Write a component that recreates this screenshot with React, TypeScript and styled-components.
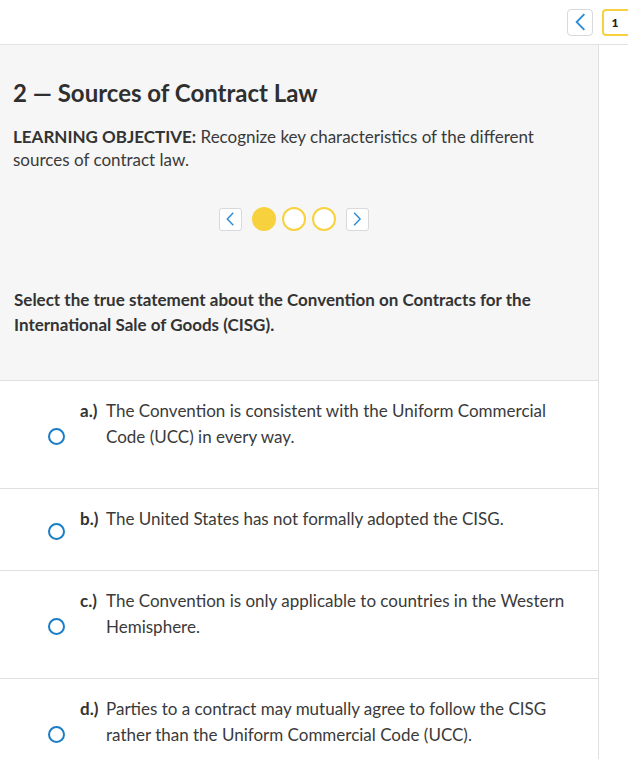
import styled, { createGlobalStyle } from 'styled-components'

const GlobalStyle = createGlobalStyle`
  html, body {
    margin: 0;
    padding: 0;
    background: #ffffff;
  }
  body {
    font-family: Lato, "Open Sans", "Liberation Sans", sans-serif;
    color: #333333;
    -webkit-font-smoothing: antialiased;
  }
`

const Page = styled.div`
  width: 628px;
  height: 759px;
  overflow: hidden;
`

const TopBar = styled.div`
  display: flex;
  justify-content: flex-end;
  align-items: center;
  gap: 9px;
  height: 44px;
  border-bottom: 1px solid #e2e2e2;
  margin-right: -6px;
`

const BackButton = styled.button`
  display: flex;
  align-items: center;
  justify-content: center;
  width: 26px;
  height: 27px;
  padding: 0;
  background: #ffffff;
  border: 1.5px solid #d8d8dd;
  border-radius: 4px;
`

const CountBox = styled.div`
  display: flex;
  align-items: center;
  justify-content: center;
  width: 32px;
  height: 27px;
  box-sizing: border-box;
  border: 2px solid #f7d23e;
  border-radius: 4px;
  font-size: 12px;
  font-weight: 900;
  color: #222222;
  padding-right: 6px;
`

const Body = styled.div`
  display: flex;
`

const Main = styled.div`
  width: 598px;
  border-right: 1px solid #e0e0e0;
  min-height: 714px;
`

const Intro = styled.section`
  background: #f6f6f6;
  padding: 34px 40px 43px 13px;
  border-bottom: 1px solid #e0e0e0;
`

const Title = styled.h1`
  margin: 0;
  font-size: 24px;
  line-height: 28px;
  font-weight: 700;
  color: #2f2f2f;
`

const Objective = styled.p`
  margin: 18px 0 0;
  font-size: 17px;
  line-height: 23px;
  color: #3a3a3a;
  strong {
    font-weight: 700;
    color: #333333;
  }
`

const Pager = styled.div`
  display: flex;
  align-items: center;
  justify-content: center;
  margin-top: 36px;
  margin-left: 17px;
`

const PagerButton = styled.button`
  display: flex;
  align-items: center;
  justify-content: center;
  width: 23px;
  height: 23px;
  padding: 0;
  background: #ffffff;
  border: 1.5px solid #d8d8dd;
  border-radius: 3px;
  margin: 0 10px;
`

const Dots = styled.div`
  display: flex;
  gap: 6px;
`

const Dot = styled.span<{ $active?: boolean }>`
  width: 24px;
  height: 24px;
  box-sizing: border-box;
  border-radius: 50%;
  border: 2px solid #f7d23e;
  background: ${(p) => (p.$active ? '#f7d23e' : '#ffffff')};
`

const Question = styled.p`
  margin: 56px 0 0 1px;
  font-size: 17px;
  line-height: 25px;
  font-weight: 700;
  color: #333333;
`

const Option = styled.label`
  display: flex;
  align-items: center;
  padding: 17px 28px 17px 48px;
  border-bottom: 1px solid #e0e0e0;
  &:last-child {
    border-bottom: none;
  }
`

const Radio = styled.span`
  flex: none;
  width: 17px;
  height: 17px;
  box-sizing: border-box;
  border-radius: 50%;
  border: 2px solid #1b7dc6;
  margin-top: 3px;
`

const OptionText = styled.div`
  display: flex;
  align-self: flex-start;
  margin: 0 0 21px 15px;
  font-size: 17px;
  line-height: 26px;
  color: #3a3a3a;
`

const Letter = styled.span`
  flex: none;
  width: 26px;
  font-weight: 700;
  color: #333333;
`

const Chevron = ({ dir, size = 14 }: { dir: 'left' | 'right'; size?: number }) => (
  <svg width={size * 0.6} height={size} viewBox="0 0 6 10" fill="none">
    <path
      d={dir === 'left' ? 'M5.2 0.6 L0.9 5 L5.2 9.4' : 'M0.8 0.6 L5.1 5 L0.8 9.4'}
      stroke="#2a8ad4"
      strokeWidth="1"
      strokeLinejoin="miter"
    />
  </svg>
)

const options = [
  {
    letter: 'a.)',
    text: 'The Convention is consistent with the Uniform Commercial Code (UCC) in every way.',
  },
  { letter: 'b.)', text: 'The United States has not formally adopted the CISG.' },
  {
    letter: 'c.)',
    text: 'The Convention is only applicable to countries in the Western Hemisphere.',
  },
  {
    letter: 'd.)',
    text: 'Parties to a contract may mutually agree to follow the CISG rather than the Uniform Commercial Code (UCC).',
  },
]

const App = () => {
  return (
    <Page>
      <GlobalStyle />
      <TopBar>
        <BackButton>
          <Chevron dir="left" size={18} />
        </BackButton>
        <CountBox>1</CountBox>
      </TopBar>
      <Body>
        <Main>
          <Intro>
            <Title>2 — Sources of Contract Law</Title>
            <Objective>
              <strong>LEARNING OBJECTIVE:</strong> Recognize key characteristics of the different
              sources of contract law.
            </Objective>
            <Pager>
              <PagerButton>
                <Chevron dir="left" />
              </PagerButton>
              <Dots>
                <Dot $active />
                <Dot />
                <Dot />
              </Dots>
              <PagerButton>
                <Chevron dir="right" />
              </PagerButton>
            </Pager>
            <Question>
              Select the true statement about the Convention on Contracts for the International
              Sale of Goods (CISG).
            </Question>
          </Intro>
          {options.map((o) => (
            <Option key={o.letter}>
              <Radio />
              <OptionText>
                <Letter>{o.letter}</Letter>
                <span>{o.text}</span>
              </OptionText>
            </Option>
          ))}
        </Main>
      </Body>
    </Page>
  )
}

export default App
